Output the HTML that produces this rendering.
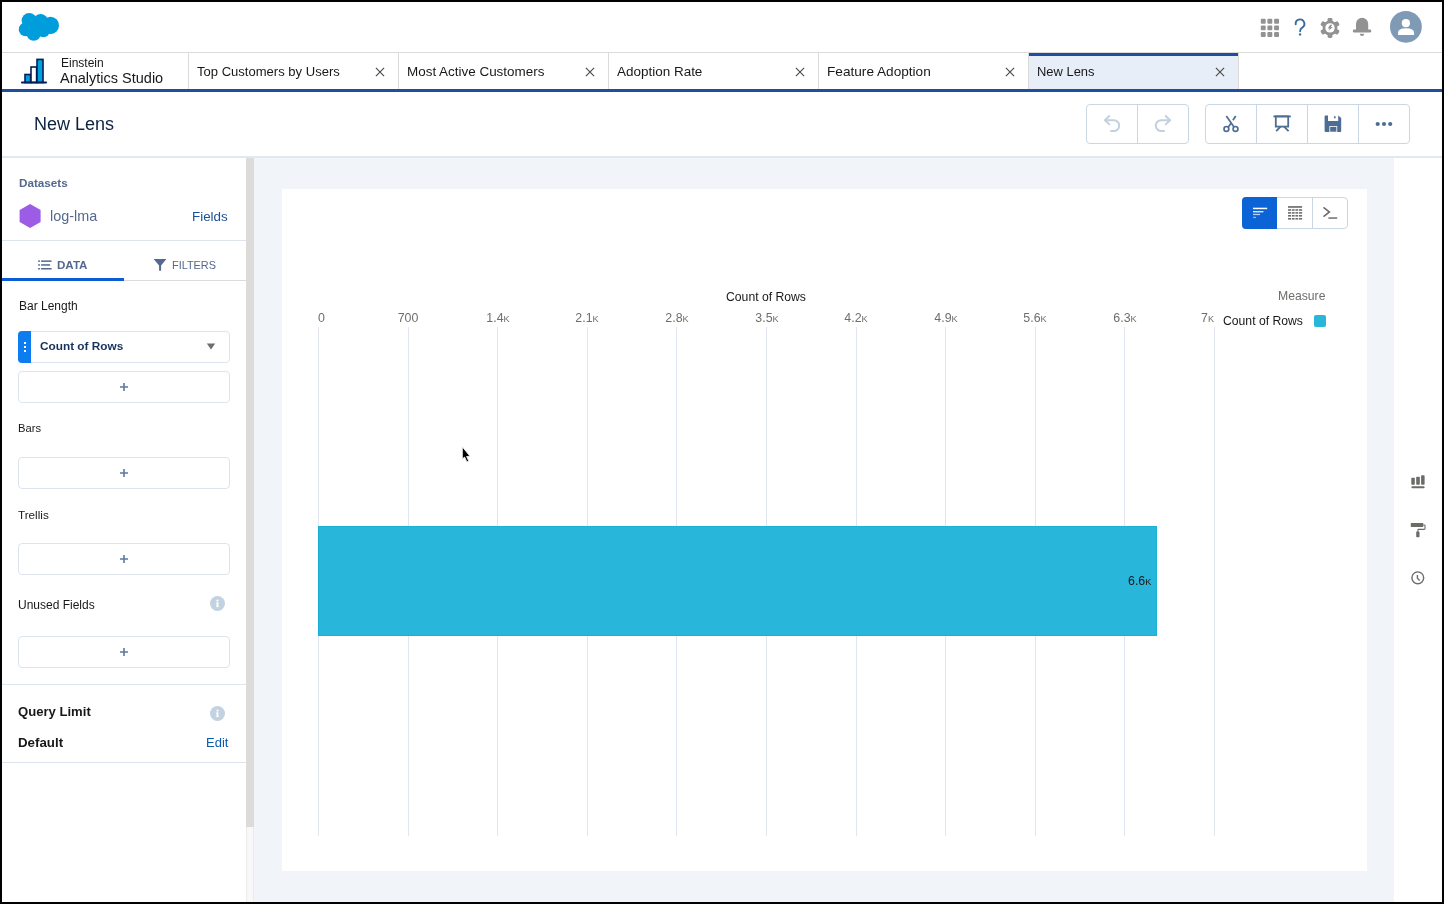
<!DOCTYPE html>
<html><head><meta charset="utf-8"><title>New Lens</title>
<style>
html,body{margin:0;padding:0;}
body{width:1444px;height:904px;position:relative;overflow:hidden;background:#000;font-family:"Liberation Sans",sans-serif;}
.t{position:absolute;line-height:1;white-space:nowrap;will-change:transform;}
.k{font-size:0.74em;}
</style></head><body>
<div style="position:absolute;left:2px;top:2px;width:1440px;height:900px;background:#fff"></div>
<svg style="position:absolute;left:0;top:0" width="80" height="52" viewBox="0 0 80 52">
<g fill="#009ddc">
<circle cx="29.2" cy="20.6" r="7.6"/><circle cx="40.6" cy="21.5" r="7.4"/><circle cx="50.4" cy="25.4" r="8.6"/>
<circle cx="25.6" cy="29.4" r="6.8"/><circle cx="33.7" cy="33.6" r="7.2"/><circle cx="43.4" cy="30.6" r="6.6"/>
<rect x="27" y="21" width="20" height="12"/>
</g></svg>
<svg style="position:absolute;left:1250px;top:5px" width="180" height="44" viewBox="1250 5 180 44">
<g fill="#929292">
<rect x="1260.8" y="18.8" width="4.9" height="4.9" rx="1"/><rect x="1267.4" y="18.8" width="4.9" height="4.9" rx="1"/><rect x="1274.1" y="18.8" width="4.9" height="4.9" rx="1"/>
<rect x="1260.8" y="25.4" width="4.9" height="4.9" rx="1"/><rect x="1267.4" y="25.4" width="4.9" height="4.9" rx="1"/><rect x="1274.1" y="25.4" width="4.9" height="4.9" rx="1"/>
<rect x="1260.8" y="32.0" width="4.9" height="4.9" rx="1"/><rect x="1267.4" y="32.0" width="4.9" height="4.9" rx="1"/><rect x="1274.1" y="32.0" width="4.9" height="4.9" rx="1"/>
</g>
<path d="M1295.7 24.4 A4.35 4.35 0 1 1 1302.5 27.4 Q1300.1 28.8 1300.1 31.2" fill="none" stroke="#3c6a9c" stroke-width="1.9" stroke-linecap="round"/>
<circle cx="1300.1" cy="34.4" r="1.2" fill="#3c6a9c"/>
<g transform="translate(1330 27.9)" fill="#929292">
<circle r="7.4"/>
<rect x="-2.4" y="-10" width="4.8" height="5" rx="1.4"/>
<rect x="-2.4" y="-10" width="4.8" height="5" rx="1.4" transform="rotate(60)"/>
<rect x="-2.4" y="-10" width="4.8" height="5" rx="1.4" transform="rotate(120)"/>
<rect x="-2.4" y="-10" width="4.8" height="5" rx="1.4" transform="rotate(180)"/>
<rect x="-2.4" y="-10" width="4.8" height="5" rx="1.4" transform="rotate(240)"/>
<rect x="-2.4" y="-10" width="4.8" height="5" rx="1.4" transform="rotate(300)"/>
<circle r="4.7" fill="#fff"/>
<path d="M0.2 -3.1 H2.2 L0.9 -0.9 H2.6 L-1.5 3.2 L-0.3 0.5 H-2.3 Z" fill="#929292"/>
</g>
<path d="M1356 30 V23.8 A6.1 6.1 0 0 1 1368.2 23.8 V30 Z" fill="#929292"/>
<rect x="1352.9" y="29.6" width="18.3" height="2.8" rx="1.2" fill="#929292"/>
<path d="M1359.8 33.8 H1364.2 A2.2 2.2 0 0 1 1359.8 33.8 Z" fill="#929292"/>
<circle cx="1405.9" cy="26.8" r="15.9" fill="#7f9ab5"/>
<circle cx="1405.9" cy="23.2" r="4.1" fill="#fff"/>
<path d="M1398 35.1 V32.8 Q1398 28.2 1405.9 28.2 Q1414.1 28.2 1414.1 32.8 V35.1 Z" fill="#fff"/>
</svg>
<div style="position:absolute;left:2px;top:52px;width:1440px;height:1px;background:#dddbda"></div>
<div style="position:absolute;left:2px;top:89px;width:1440px;height:3px;background:#1d4f9e"></div>
<svg style="position:absolute;left:15px;top:52px" width="40" height="36" viewBox="15 52 40 36">
<g stroke="#032054" stroke-width="1.6" fill="#00a1e0">
<rect x="25" y="74.5" width="5.6" height="8"/>
<rect x="31" y="67" width="5.6" height="15.5" fill="#fff"/>
<rect x="37" y="59.4" width="6" height="23.1"/>
</g>
<rect x="21" y="81.6" width="26" height="1.8" rx="0.9" fill="#032054"/>
</svg>
<div class="t" style="left:60.50px;top:57.04px;font-size:12px;color:#181818;">Einstein</div>
<div class="t" style="left:60.20px;top:70.73px;font-size:14.5px;color:#181818;">Analytics Studio</div>
<div style="position:absolute;left:188px;top:53px;width:1px;height:36px;background:#dddbda"></div>
<div class="t" style="left:197.30px;top:65.14px;font-size:13.06px;color:#181818;">Top Customers by Users</div>
<svg style="position:absolute;left:374px;top:66px" width="12" height="12" viewBox="0 0 12 12"><path d="M1.9 1.9 L10.1 10.1 M10.1 1.9 L1.9 10.1" stroke="#4a4a48" stroke-width="1.15"/></svg>
<div style="position:absolute;left:398px;top:53px;width:1px;height:36px;background:#dddbda"></div>
<div class="t" style="left:407.30px;top:64.82px;font-size:13.44px;color:#181818;">Most Active Customers</div>
<svg style="position:absolute;left:584px;top:66px" width="12" height="12" viewBox="0 0 12 12"><path d="M1.9 1.9 L10.1 10.1 M10.1 1.9 L1.9 10.1" stroke="#4a4a48" stroke-width="1.15"/></svg>
<div style="position:absolute;left:608px;top:53px;width:1px;height:36px;background:#dddbda"></div>
<div class="t" style="left:617.30px;top:64.80px;font-size:13.47px;color:#181818;">Adoption Rate</div>
<svg style="position:absolute;left:794px;top:66px" width="12" height="12" viewBox="0 0 12 12"><path d="M1.9 1.9 L10.1 10.1 M10.1 1.9 L1.9 10.1" stroke="#4a4a48" stroke-width="1.15"/></svg>
<div style="position:absolute;left:818px;top:53px;width:1px;height:36px;background:#dddbda"></div>
<div class="t" style="left:827.30px;top:64.66px;font-size:13.63px;color:#181818;">Feature Adoption</div>
<svg style="position:absolute;left:1004px;top:66px" width="12" height="12" viewBox="0 0 12 12"><path d="M1.9 1.9 L10.1 10.1 M10.1 1.9 L1.9 10.1" stroke="#4a4a48" stroke-width="1.15"/></svg>
<div style="position:absolute;left:1028px;top:53px;width:211px;height:36px;background:#e8eef7;border-left:1px solid #d8dde6;border-right:1px solid #d8dde6;box-sizing:border-box"></div>
<div style="position:absolute;left:1028px;top:53px;width:211px;height:3px;background:#1d4f9e"></div>
<div style="position:absolute;left:1028px;top:53px;width:1px;height:36px;background:#dddbda"></div>
<div class="t" style="left:1037.30px;top:65.75px;font-size:12.93px;color:#181818;">New Lens</div>
<svg style="position:absolute;left:1214px;top:66px" width="12" height="12" viewBox="0 0 12 12"><path d="M1.9 1.9 L10.1 10.1 M10.1 1.9 L1.9 10.1" stroke="#4a4a48" stroke-width="1.15"/></svg>
<div style="position:absolute;left:1238px;top:53px;width:1px;height:36px;background:#dddbda"></div>
<div class="t" style="left:34.30px;top:115.36px;font-size:18.0px;color:#0c2340;">New Lens</div>
<div style="position:absolute;left:2px;top:156px;width:1440px;height:2px;background:#e2e8ef"></div>
<div style="position:absolute;left:1086px;top:104px;width:103px;height:40px;border:1px solid #c9d7e4;border-radius:4px;box-sizing:border-box;background:#fff"></div>
<div style="position:absolute;left:1137px;top:104px;width:1px;height:40px;background:#c9d7e4"></div>
<div style="position:absolute;left:1205px;top:104px;width:205px;height:40px;border:1px solid #c9d7e4;border-radius:4px;box-sizing:border-box;background:#fff"></div>
<div style="position:absolute;left:1256px;top:104px;width:1px;height:40px;background:#c9d7e4"></div>
<div style="position:absolute;left:1307px;top:104px;width:1px;height:40px;background:#c9d7e4"></div>
<div style="position:absolute;left:1358px;top:104px;width:1px;height:40px;background:#c9d7e4"></div>
<svg style="position:absolute;left:1086px;top:104px" width="330" height="40" viewBox="1086 104 330 40">
<g fill="none" stroke="#c3d1df" stroke-width="2" stroke-linecap="round" stroke-linejoin="round">
<path d="M1105 120.2 H1113.8 A5.4 5.4 0 0 1 1113.8 131 H1111"/>
<path d="M1109.3 116 L1105 120.2 L1109.3 124.4"/>
<path d="M1170 120.2 H1161.2 A5.4 5.4 0 0 0 1161.2 131 H1164"/>
<path d="M1165.7 116 L1170 120.2 L1165.7 124.4"/>
</g>
<g fill="none" stroke="#4e6d95" stroke-width="1.7" stroke-linecap="butt">
<path d="M1226.3 116 L1234 127"/>
<path d="M1235.7 116 L1232.9 120.3"/>
<path d="M1231.2 123 L1228.3 127"/>
<circle cx="1226.4" cy="128.9" r="2.4"/>
<circle cx="1235.5" cy="128.9" r="2.4"/>
</g>
<g fill="none" stroke="#4e6d95" stroke-width="1.8">
<path d="M1273.4 116.4 H1290.8"/>
<rect x="1275.8" y="116.4" width="12.4" height="10.2"/>
<path d="M1280.5 126.6 L1276.2 131.2 M1284 126.6 L1288.6 131.2"/>
</g>
<path fill="#4e6d95" d="M1325.4 115.6 H1328 V121 H1338.2 V115.6 L1341.2 118 V131 Q1341.2 132 1340.2 132 H1337.2 V125.9 H1329.4 V132 H1325.6 Q1324.6 132 1324.6 131 V116.4 Q1324.6 115.6 1325.4 115.6 Z"/>
<rect x="1330.2" y="126.8" width="6.2" height="4.9" fill="#4e6d95"/>
<rect x="1334" y="116" width="1.6" height="2.6" rx="0.8" fill="#4e6d95"/>
<g fill="#4e6d95"><circle cx="1377.7" cy="124" r="2.1"/><circle cx="1384" cy="124" r="2.1"/><circle cx="1390.2" cy="124" r="2.1"/></g>
</svg>
<div style="position:absolute;left:246px;top:158px;width:8px;height:669px;background:#dddbda"></div>
<div style="position:absolute;left:246px;top:827px;width:8px;height:75px;background:linear-gradient(to right,#e6e6e6 0,#f7f7f7 1.5px,#f9f9f9 4px,#f7f7f7 6.5px,#e6e6e6 8px)"></div>
<div style="position:absolute;left:254px;top:158px;width:1188px;height:744px;background:#f1f5fa"></div>
<div class="t" style="left:18.70px;top:177.10px;font-size:11.7px;color:#54698d;font-weight:bold;">Datasets</div>
<svg style="position:absolute;left:18px;top:203px" width="24" height="26" viewBox="0 0 24 26"><path d="M12.1 0.9 L22.6 6.9 V18.9 L12.1 24.9 L1.6 18.9 V6.9 Z" fill="#9c5ce6"/></svg>
<div class="t" style="left:50.00px;top:208.81px;font-size:14.4px;color:#54698d;">log-lma</div>
<div class="t" style="left:192.20px;top:209.56px;font-size:13.4px;color:#1a4f9a;">Fields</div>
<div style="position:absolute;left:2px;top:240px;width:244px;height:1px;background:#dde4ee"></div>
<svg style="position:absolute;left:36px;top:256px" width="20" height="18" viewBox="36 256 20 18">
<g fill="#54698d"><rect x="38.2" y="260.4" width="1.7" height="1.5"/><rect x="38.2" y="264.2" width="1.7" height="1.5"/><rect x="38.2" y="268" width="1.7" height="1.5"/>
<rect x="41.1" y="260.4" width="10.5" height="1.5"/><rect x="41.1" y="264.2" width="9" height="1.5"/><rect x="41.1" y="268" width="10.5" height="1.5"/></g></svg>
<div class="t" style="left:56.90px;top:259.08px;font-size:11.6px;color:#54698d;font-weight:bold;">DATA</div>
<svg style="position:absolute;left:150px;top:256px" width="20" height="18" viewBox="150 256 20 18"><path d="M153.6 259 H166.4 L161.1 265.4 V270.8 H159.1 V265.4 Z" fill="#54698d"/></svg>
<div class="t" style="left:172.00px;top:259.57px;font-size:10.9px;color:#54698d;">FILTERS</div>
<div style="position:absolute;left:2px;top:280px;width:244px;height:1px;background:#dddbda"></div>
<div style="position:absolute;left:2px;top:278px;width:122px;height:3px;background:#0b5cd5"></div>
<div class="t" style="left:18.60px;top:300.04px;font-size:12px;color:#181818;">Bar Length</div>
<div style="position:absolute;left:18px;top:331px;width:212px;height:32px;border:1px solid #dde4ee;border-radius:4px;box-sizing:border-box;background:#fff"></div>
<div style="position:absolute;left:18px;top:331px;width:13px;height:32px;background:#0c7cf0;border-radius:4px 0 0 4px"></div>
<div style="position:absolute;left:24px;top:342px;width:2px;height:2px;background:#fff"></div>
<div style="position:absolute;left:24px;top:346px;width:2px;height:2px;background:#fff"></div>
<div style="position:absolute;left:24px;top:350px;width:2px;height:2px;background:#fff"></div>
<div class="t" style="left:39.50px;top:341.01px;font-size:11.8px;color:#16325c;font-weight:bold;">Count of Rows</div>
<svg style="position:absolute;left:204px;top:341px" width="14" height="10" viewBox="0 0 14 10"><path d="M2.8 2.6 H11.2 L7 8.5 Z" fill="#706e6b"/></svg>
<div style="position:absolute;left:18px;top:371px;width:212px;height:32px;border:1px solid #dde4ee;border-radius:4px;box-sizing:border-box;background:#fff"></div>
<svg style="position:absolute;left:118px;top:381px" width="12" height="12" viewBox="0 0 12 12"><path d="M6 2 V10 M2 6 H10" stroke="#5a7aa2" stroke-width="1.6"/></svg>
<div class="t" style="left:18.40px;top:422.82px;font-size:11.2px;color:#181818;">Bars</div>
<div style="position:absolute;left:18px;top:457px;width:212px;height:32px;border:1px solid #dde4ee;border-radius:4px;box-sizing:border-box;background:#fff"></div>
<svg style="position:absolute;left:118px;top:467px" width="12" height="12" viewBox="0 0 12 12"><path d="M6 2 V10 M2 6 H10" stroke="#5a7aa2" stroke-width="1.6"/></svg>
<div class="t" style="left:18.30px;top:509.00px;font-size:11.7px;color:#181818;">Trellis</div>
<div style="position:absolute;left:18px;top:543px;width:212px;height:32px;border:1px solid #dde4ee;border-radius:4px;box-sizing:border-box;background:#fff"></div>
<svg style="position:absolute;left:118px;top:553px" width="12" height="12" viewBox="0 0 12 12"><path d="M6 2 V10 M2 6 H10" stroke="#5a7aa2" stroke-width="1.6"/></svg>
<div class="t" style="left:18.30px;top:598.64px;font-size:12px;color:#181818;">Unused Fields</div>
<svg style="position:absolute;left:209px;top:595.0px" width="17" height="17" viewBox="-8.5 -8.5 17 17"><circle r="7.5" fill="#c2d2e1"/><circle cx="0" cy="-2.9" r="1.1" fill="#fff"/><path d="M-1.2 -1.2 H0.9 V3.1 H1.5 V3.6 H-1.6 V3.1 H-1 V-0.7 H-1.2 Z" fill="#fff"/></svg>
<div style="position:absolute;left:18px;top:636px;width:212px;height:32px;border:1px solid #dde4ee;border-radius:4px;box-sizing:border-box;background:#fff"></div>
<svg style="position:absolute;left:118px;top:646px" width="12" height="12" viewBox="0 0 12 12"><path d="M6 2 V10 M2 6 H10" stroke="#5a7aa2" stroke-width="1.6"/></svg>
<div style="position:absolute;left:2px;top:684px;width:244px;height:1px;background:#dde4ee"></div>
<div class="t" style="left:18.30px;top:704.71px;font-size:13.1px;color:#181818;font-weight:bold;">Query Limit</div>
<svg style="position:absolute;left:209px;top:705.0px" width="17" height="17" viewBox="-8.5 -8.5 17 17"><circle r="7.5" fill="#c2d2e1"/><circle cx="0" cy="-2.9" r="1.1" fill="#fff"/><path d="M-1.2 -1.2 H0.9 V3.1 H1.5 V3.6 H-1.6 V3.1 H-1 V-0.7 H-1.2 Z" fill="#fff"/></svg>
<div class="t" style="left:18.30px;top:735.64px;font-size:13.3px;color:#181818;font-weight:bold;">Default</div>
<div class="t" style="left:206.10px;top:735.90px;font-size:13px;color:#0b5cab;">Edit</div>
<div style="position:absolute;left:2px;top:762px;width:244px;height:1px;background:#dde4ee"></div>
<div style="position:absolute;left:282px;top:189px;width:1085px;height:682px;background:#fff"></div>
<div style="position:absolute;left:1242px;top:197px;width:106px;height:32px;border:1px solid #c9d7e4;border-radius:4px;box-sizing:border-box;background:#fff"></div>
<div style="position:absolute;left:1242px;top:197px;width:35px;height:32px;background:#0b63d6;border-radius:4px 0 0 4px"></div>
<div style="position:absolute;left:1312px;top:197px;width:1px;height:32px;background:#c9d7e4"></div>
<svg style="position:absolute;left:1242px;top:197px" width="106" height="32" viewBox="1242 197 106 32">
<g fill="#fff"><rect x="1253" y="207.7" width="14.2" height="1.5"/><rect x="1253" y="211" width="10.4" height="1.4" opacity="0.85"/><rect x="1253" y="213.8" width="7.1" height="1.3" opacity="0.7"/><rect x="1253" y="216.8" width="3" height="1.3" opacity="0.55"/></g>
<g fill="#706e6b"><rect x="1288" y="206.1" width="14.1" height="1.7"/>
<rect x="1288" y="209.2" width="14.1" height="1.6"/><rect x="1288" y="212.1" width="14.1" height="1.6"/><rect x="1288" y="215" width="14.1" height="1.6"/><rect x="1288" y="218" width="14.1" height="1.6"/></g>
<g fill="#fff"><rect x="1291.1" y="208" width="0.8" height="12"/><rect x="1294.6" y="208" width="0.8" height="12"/><rect x="1298.1" y="208" width="0.8" height="12"/></g>
<path d="M1323.5 207.4 L1329.4 212 L1323.5 216.6" fill="none" stroke="#706e6b" stroke-width="1.6"/>
<rect x="1328.4" y="217.3" width="8.8" height="1.5" fill="#706e6b"/>
</svg>
<div style="position:absolute;left:318px;top:327px;width:1px;height:509px;background:#dfe6ef"></div>
<div style="position:absolute;left:408px;top:327px;width:1px;height:509px;background:#dfe6ef"></div>
<div style="position:absolute;left:497px;top:327px;width:1px;height:509px;background:#dfe6ef"></div>
<div style="position:absolute;left:587px;top:327px;width:1px;height:509px;background:#dfe6ef"></div>
<div style="position:absolute;left:676px;top:327px;width:1px;height:509px;background:#dfe6ef"></div>
<div style="position:absolute;left:766px;top:327px;width:1px;height:509px;background:#dfe6ef"></div>
<div style="position:absolute;left:856px;top:327px;width:1px;height:509px;background:#dfe6ef"></div>
<div style="position:absolute;left:945px;top:327px;width:1px;height:509px;background:#dfe6ef"></div>
<div style="position:absolute;left:1035px;top:327px;width:1px;height:509px;background:#dfe6ef"></div>
<div style="position:absolute;left:1124px;top:327px;width:1px;height:509px;background:#dfe6ef"></div>
<div style="position:absolute;left:1214px;top:327px;width:1px;height:509px;background:#dfe6ef"></div>
<div style="position:absolute;left:318px;top:526px;width:839px;height:110px;background:#29b6db;box-shadow:inset 0 0 0 1px #1cb0d7"></div>
<div class="t" style="right:292.30px;top:574.80px;font-size:12.4px;color:#181818;">6.6<span class=k>K</span></div>
<div class="t" style="left:766.40px;transform:translateX(-50%);top:290.87px;font-size:12.2px;color:#181818;">Count of Rows</div>
<div class="t" style="left:318.00px;top:312.10px;font-size:12.4px;color:#706e6b;">0</div>
<div class="t" style="left:408.10px;transform:translateX(-50%);top:312.10px;font-size:12.4px;color:#706e6b;">700</div>
<div class="t" style="left:497.70px;transform:translateX(-50%);top:312.10px;font-size:12.4px;color:#706e6b;">1.4<span class=k>K</span></div>
<div class="t" style="left:587.30px;transform:translateX(-50%);top:312.10px;font-size:12.4px;color:#706e6b;">2.1<span class=k>K</span></div>
<div class="t" style="left:676.90px;transform:translateX(-50%);top:312.10px;font-size:12.4px;color:#706e6b;">2.8<span class=k>K</span></div>
<div class="t" style="left:766.50px;transform:translateX(-50%);top:312.10px;font-size:12.4px;color:#706e6b;">3.5<span class=k>K</span></div>
<div class="t" style="left:856.10px;transform:translateX(-50%);top:312.10px;font-size:12.4px;color:#706e6b;">4.2<span class=k>K</span></div>
<div class="t" style="left:945.70px;transform:translateX(-50%);top:312.10px;font-size:12.4px;color:#706e6b;">4.9<span class=k>K</span></div>
<div class="t" style="left:1035.30px;transform:translateX(-50%);top:312.10px;font-size:12.4px;color:#706e6b;">5.6<span class=k>K</span></div>
<div class="t" style="left:1124.90px;transform:translateX(-50%);top:312.10px;font-size:12.4px;color:#706e6b;">6.3<span class=k>K</span></div>
<div class="t" style="right:229.70px;top:312.10px;font-size:12.4px;color:#706e6b;">7<span class=k>K</span></div>
<div class="t" style="right:118.30px;top:290.07px;font-size:12.2px;color:#706e6b;">Measure</div>
<div class="t" style="left:1223.40px;top:314.97px;font-size:12.2px;color:#181818;">Count of Rows</div>
<div style="position:absolute;left:1314px;top:315px;width:12px;height:12px;background:#29b6db;border-radius:2px"></div>
<div style="position:absolute;left:1394px;top:158px;width:48px;height:744px;background:#fff"></div>
<svg style="position:absolute;left:1400px;top:465px" width="36" height="130" viewBox="1400 465 36 130">
<g fill="#6b6b67">
<rect x="1411.3" y="477.8" width="3.5" height="6.9" rx="0.8"/>
<rect x="1416.2" y="476.8" width="3.6" height="7.9" rx="0.8"/>
<rect x="1421.1" y="475.3" width="3.5" height="9.4" rx="0.8"/>
<rect x="1411.4" y="486.2" width="13.2" height="2" rx="1"/>
<rect x="1410.8" y="522.9" width="12.4" height="4.1" rx="0.6"/>
<rect x="1416.2" y="531.6" width="3.3" height="5.6" rx="0.8"/>
</g>
<path d="M1423 525 H1424.4 Q1425 525 1425 525.6 V528.6 Q1425 529.4 1424.2 529.4 H1418.6 Q1417.9 529.4 1417.9 530.1 V532" fill="none" stroke="#6b6b67" stroke-width="1.1"/>
<circle cx="1417.8" cy="577.8" r="5.9" fill="none" stroke="#6b6b67" stroke-width="1.4"/>
<path d="M1417.4 575 V578.2 L1419.7 580.4" fill="none" stroke="#6b6b67" stroke-width="1.4"/>
</svg>
<svg style="position:absolute;left:455px;top:443px" width="22" height="24" viewBox="455 443 22 24"><path d="M462.3 446.8 V459 L464.6 457.1 L466.9 461.9 L468.8 461 L466.6 456.5 L470 456.3 Z" fill="#000" stroke="#f2f2f2" stroke-width="0.9" stroke-linejoin="round"/></svg>
</body></html>
